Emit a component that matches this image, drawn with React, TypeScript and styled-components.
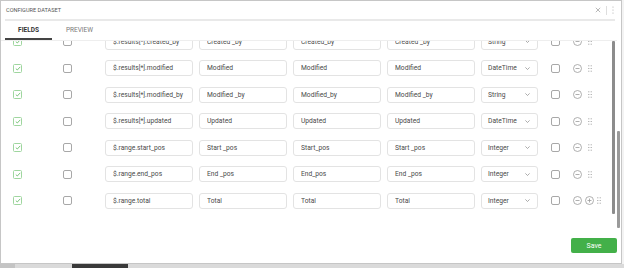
import React, { useLayoutEffect, useRef } from 'react';
import styled, { createGlobalStyle } from 'styled-components';

const GlobalStyle = createGlobalStyle`
  html, body {
    margin: 0;
    padding: 0;
  }
  body {
    background: #f3f3f3;
    font-family: Roboto, "Liberation Sans", sans-serif;
    width: 624px;
    height: 268px;
    overflow: hidden;
  }
`;

const Screen = styled.div`
  width: 624px;
  height: 268px;
  display: flex;
  flex-direction: column;
`;

const Dialog = styled.div`
  width: 622px;
  height: 264px;
  box-sizing: border-box;
  border: 1px solid #c6c6c6;
  background: #fff;
  display: flex;
  flex-direction: column;
`;

const Header = styled.div`
  height: 18px;
  margin: 0 6px 0 4px;
  padding-left: 1px;
  border-bottom: 2px solid #e9e9e9;
  display: flex;
  align-items: center;
`;

const Title = styled.div`
  flex: 1;
  font-size: 5.6px;
  color: #555;
  text-transform: uppercase;
`;

const HeaderTools = styled.div`
  display: flex;
  align-items: center;
  gap: 5px;
  margin-right: 1px;
`;

const Divider = styled.div`
  width: 1px;
  height: 9px;
  background: #dedede;
`;

const Body = styled.div`
  flex: 1;
  display: flex;
  min-height: 0;
`;

const Main = styled.div`
  flex: 1;
  display: flex;
  flex-direction: column;
  min-width: 0;
`;

const Track = styled.div<{ $w: number; $mr: number }>`
  width: ${(p) => p.$w}px;
  margin-right: ${(p) => p.$mr}px;
  display: flex;
  flex-direction: column;
`;

const Thumb = styled.div<{ $top: number; $h: number; $c: string }>`
  margin-top: ${(p) => p.$top}px;
  height: ${(p) => p.$h}px;
  background: ${(p) => p.$c};
  border-radius: 1px;
`;

const Tabs = styled.div`
  height: 19px;
  padding-left: 4px;
  border-bottom: 1px solid #eeeeee;
  display: flex;
`;

const Tab = styled.div<{ $active?: boolean; $w: number }>`
  width: ${(p) => p.$w}px;
  box-sizing: border-box;
  height: 19px;
  border-bottom: 2px solid ${(p) => (p.$active ? '#444' : 'transparent')};
  display: flex;
  align-items: center;
  justify-content: center;
  font-size: 6.5px;
  font-weight: ${(p) => (p.$active ? 700 : 400)};
  color: ${(p) => (p.$active ? '#333' : '#7a7a7a')};
`;

const RowsWrap = styled.div`
  flex: 1;
  display: flex;
  min-height: 0;
`;

const List = styled.div`
  flex: 1;
  overflow: hidden;
  padding-left: 12px;
`;

const ListInner = styled.div`
  padding-bottom: 24px;
`;

const Row = styled.div`
  height: 26.5px;
  display: grid;
  grid-template-columns: 50px 42px 94px 94px 94px 94px 70px 22px 1fr;
  align-items: center;
`;

const GreenBox = styled.div`
  width: 9px;
  height: 9px;
  box-sizing: border-box;
  border: 1px solid #9fd69f;
  border-radius: 1.5px;
  display: flex;
  align-items: center;
  justify-content: center;
`;

const GrayBox = styled.div`
  width: 9px;
  height: 9px;
  box-sizing: border-box;
  border: 1px solid #a8a8a8;
  border-radius: 2px;
`;

const Field = styled.input`
  width: 88px;
  height: 16px;
  box-sizing: border-box;
  border: 1px solid #e3e3e3;
  border-radius: 3px;
  padding: 0 4px 0 7px;
  font-family: Roboto, "Liberation Sans", sans-serif;
  font-size: 6.7px;
  color: #4a4a4a;
  background: #fff;
  outline: none;
`;

const Select = styled.div`
  width: 57px;
  height: 16px;
  box-sizing: border-box;
  border: 1px solid #e3e3e3;
  border-radius: 3px;
  padding: 0 7px 0 6px;
  display: flex;
  align-items: center;
  justify-content: space-between;
  font-size: 6.7px;
  color: #4a4a4a;
`;

const Actions = styled.div<{ $gap: number }>`
  display: flex;
  align-items: center;
  gap: ${(p) => p.$gap}px;
`;

const Footer = styled.div`
  height: 33px;
  box-sizing: border-box;
  padding-top: 8px;
  display: flex;
  justify-content: flex-end;
  align-items: flex-start;
`;

const SaveButton = styled.button`
  width: 46px;
  height: 15px;
  border: none;
  border-radius: 2px;
  background: #43b049;
  color: #fff;
  font-family: Roboto, "Liberation Sans", sans-serif;
  font-size: 7px;
  padding: 0;
`;

const BottomStrip = styled.div`
  flex: 1;
  display: flex;
`;

const StripPart = styled.div<{ $w?: number; $c: string }>`
  ${(p) => (p.$w ? `width: ${p.$w}px;` : 'flex: 1;')}
  background: ${(p) => p.$c};
`;

const Check = () => (
  <svg width="6" height="5" viewBox="0 0 6 5">
    <path d="M0.8 2.6 L2.3 4 L5.2 0.9" fill="none" stroke="#6cc06c" strokeWidth="0.9" />
  </svg>
);

const Chevron = () => (
  <svg width="5" height="3" viewBox="0 0 5 3">
    <path d="M0.4 0.4 L2.5 2.5 L4.6 0.4" fill="none" stroke="#888" strokeWidth="0.7" />
  </svg>
);

const CircleIcon = ({ plus }: { plus?: boolean }) => (
  <svg width="9" height="9" viewBox="0 0 9 9">
    <circle cx="4.5" cy="4.5" r="4" fill="none" stroke="#9a9a9a" strokeWidth="0.8" />
    <path d="M2.5 4.5 H6.5" stroke="#9a9a9a" strokeWidth="0.8" />
    {plus && <path d="M4.5 2.5 V6.5" stroke="#9a9a9a" strokeWidth="0.8" />}
  </svg>
);

const DragDots = () => (
  <svg width="4" height="7" viewBox="0 0 4 7">
    {[0.8, 3.2].map((x) =>
      [0.8, 3.5, 6.2].map((y) => <rect key={`${x}-${y}`} x={x - 0.5} y={y - 0.5} width="1" height="1" fill="#9a9a9a" />)
    )}
  </svg>
);

const CloseIcon = () => (
  <svg width="6" height="6" viewBox="0 0 6 6">
    <path d="M0.8 0.8 L5.2 5.2 M5.2 0.8 L0.8 5.2" stroke="#999" strokeWidth="0.7" />
  </svg>
);

const Kebab = () => (
  <svg width="2" height="8" viewBox="0 0 2 8">
    <circle cx="1" cy="1" r="0.6" fill="#aaa" />
    <circle cx="1" cy="4" r="0.6" fill="#aaa" />
    <circle cx="1" cy="7" r="0.6" fill="#aaa" />
  </svg>
);

type Mapping = { path: string; name: string; label: string; alias: string; type: string };

const rows: Mapping[] = [
  { path: '$.results[*].created', name: 'Created', label: 'Created', alias: 'Created', type: 'DateTime' },
  { path: '$.results[*].created_by', name: 'Created _by', label: 'Created_by', alias: 'Created _by', type: 'String' },
  { path: '$.results[*].modified', name: 'Modified', label: 'Modified', alias: 'Modified', type: 'DateTime' },
  { path: '$.results[*].modified_by', name: 'Modified _by', label: 'Modified_by', alias: 'Modified _by', type: 'String' },
  { path: '$.results[*].updated', name: 'Updated', label: 'Updated', alias: 'Updated', type: 'DateTime' },
  { path: '$.range.start_pos', name: 'Start _pos', label: 'Start_pos', alias: 'Start _pos', type: 'Integer' },
  { path: '$.range.end_pos', name: 'End _pos', label: 'End_pos', alias: 'End _pos', type: 'Integer' },
  { path: '$.range.total', name: 'Total', label: 'Total', alias: 'Total', type: 'Integer' },
];

const FieldRow = ({ row, last }: { row: Mapping; last: boolean }) => (
  <Row>
    <GreenBox>
      <Check />
    </GreenBox>
    <GrayBox />
    <Field readOnly value={row.path} />
    <Field readOnly value={row.name} />
    <Field readOnly value={row.label} />
    <Field readOnly value={row.alias} />
    <Select>
      <span>{row.type}</span>
      <Chevron />
    </Select>
    <GrayBox />
    <Actions $gap={last ? 3 : 6}>
      <CircleIcon />
      {last && <CircleIcon plus />}
      <DragDots />
    </Actions>
  </Row>
);

export default function App() {
  const listRef = useRef<HTMLDivElement>(null);

  useLayoutEffect(() => {
    if (listRef.current) listRef.current.scrollTop = 39;
  }, []);

  return (
    <Screen>
      <GlobalStyle />
      <Dialog>
        <Header>
          <Title>Configure Dataset</Title>
          <HeaderTools>
            <CloseIcon />
            <Divider />
            <Kebab />
          </HeaderTools>
        </Header>
        <Body>
          <Main>
            <Tabs>
              <Tab $active $w={47}>FIELDS</Tab>
              <Tab $w={55}>PREVIEW</Tab>
            </Tabs>
            <RowsWrap>
              <List ref={listRef}>
                <ListInner>
                  {rows.map((r, i) => (
                    <FieldRow key={r.path} row={r} last={i === rows.length - 1} />
                  ))}
                </ListInner>
              </List>
              <Track $w={3} $mr={2}>
                <Thumb $top={0} $h={173} $c="#8c8c8c" />
              </Track>
            </RowsWrap>
            <Footer>
              <SaveButton>Save</SaveButton>
            </Footer>
          </Main>
          <Track $w={3} $mr={1}>
            <Thumb $top={110} $h={97} $c="#9a9a9a" />
          </Track>
        </Body>
      </Dialog>
      <BottomStrip>
        <StripPart $w={15} $c="#c4c4c4" />
        <StripPart $w={57} $c="#dadada" />
        <StripPart $w={56} $c="#3a3a3a" />
        <StripPart $c="#dadada" />
      </BottomStrip>
    </Screen>
  );
}
